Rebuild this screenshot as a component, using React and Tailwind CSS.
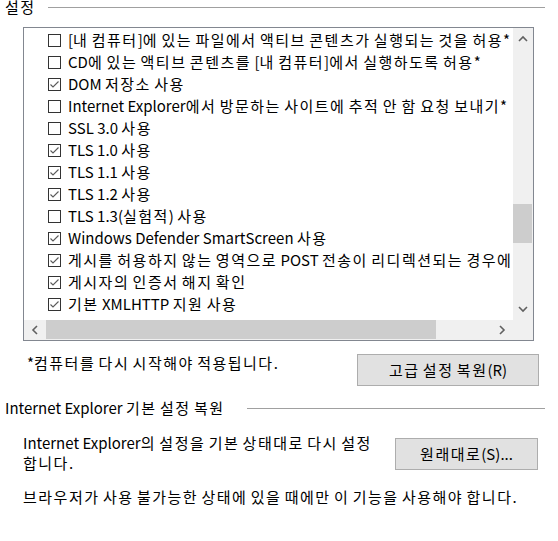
import React from 'react';

const items = [
  { label: '[내 컴퓨터]에 있는 파일에서 액티브 콘텐츠가 실행되는 것을 허용*', checked: false },
  { label: 'CD에 있는 액티브 콘텐츠를 [내 컴퓨터]에서 실행하도록 허용*', checked: false },
  { label: 'DOM 저장소 사용', checked: true },
  { label: 'Internet Explorer에서 방문하는 사이트에 추적 안 함 요청 보내기*', checked: false },
  { label: 'SSL 3.0 사용', checked: false },
  { label: 'TLS 1.0 사용', checked: true },
  { label: 'TLS 1.1 사용', checked: true },
  { label: 'TLS 1.2 사용', checked: true },
  { label: 'TLS 1.3(실험적) 사용', checked: false },
  { label: 'Windows Defender SmartScreen 사용', checked: true },
  { label: '게시를 허용하지 않는 영역으로 POST 전송이 리디렉션되는 경우에 경고', checked: true },
  { label: '게시자의 인증서 해지 확인', checked: true },
  { label: '기본 XMLHTTP 지원 사용', checked: true },
  // next row is scrolled almost out of view: only its checkbox edge shows
  { label: '', checked: true },
];

// Hangul glyphs in the reference font run a little wider than the Latin ones,
// so only the Hangul runs get extra tracking.
const K = ({ children }) => {
  const parts = String(children).split(/([\uAC00-\uD7A3]+)/);
  return parts.map((p, i) =>
    /[\uAC00-\uD7A3]/.test(p) ? (
      <span key={i} className="tracking-[1.5px]">{p}</span>
    ) : (
      <React.Fragment key={i}>{p}</React.Fragment>
    )
  );
};

const Checkbox = ({ checked }) => (
  <span className="w-[13px] h-[13px] border border-[#333333] bg-white shrink-0 flex items-center justify-center">
    {checked && (
      <svg width="11" height="11" viewBox="0 0 11 11">
        <polyline points="1.5,5.5 4,8 9.5,2.5" fill="none" stroke="#5a5a5a" strokeWidth="1.1" />
      </svg>
    )}
  </span>
);

const Chevron = ({ dir }) => {
  const pts = {
    up: '1,6 5,2 9,6',
    down: '1,2 5,6 9,2',
    left: '6,1 2,5 6,9',
    right: '2,1 6,5 2,9',
  }[dir];
  const w = dir === 'up' || dir === 'down' ? 10 : 8;
  const h = dir === 'up' || dir === 'down' ? 8 : 10;
  return (
    <svg width={w} height={h} viewBox={`0 0 ${w} ${h}`}>
      <polyline points={pts} fill="none" stroke="#606060" strokeWidth="1.6" />
    </svg>
  );
};

const GroupHeader = ({ title, lineWidth, className }) => (
  <div className={`flex items-center justify-between h-[22px] pl-[5px] pr-[13px] ${className}`}>
    <span className="text-[15px] leading-[18px] whitespace-nowrap"><K>{title}</K></span>
    <span className="h-px bg-[#a0a0a0]" style={{ width: lineWidth }} />
  </div>
);

const App = () => {
  return (
    <div
      className="w-[558px] h-[541px] bg-white overflow-hidden text-black"
      style={{ fontFamily: '"Noto Sans CJK KR", sans-serif' }}
    >
      <GroupHeader title="설정" lineWidth={497} className="-mt-[4px]" />

      <div className="ml-[23px] mt-[9px] w-[511px] h-[314px] border border-[#828790] grid grid-cols-[1fr_20px] grid-rows-[1fr_20px]">
        <div className="overflow-hidden pt-px bg-white">
          {items.map((it, i) => (
            <div key={i} className="flex items-center h-[22px] pl-[24px] gap-[7px] whitespace-nowrap">
              <Checkbox checked={it.checked} />
              {it.label && <span className="text-[15px] leading-[18px]"><K>{it.label}</K></span>}
            </div>
          ))}
        </div>

        <div className="bg-[#f0f0f0] flex flex-col">
          <div className="h-[22px] flex items-center justify-center">
            <Chevron dir="up" />
          </div>
          <div className="flex-1 flex flex-col pr-px">
            <div className="h-[154px]" />
            <div className="h-[39px] bg-[#cdcdcd]" />
          </div>
          <div className="h-[22px] flex items-center justify-center">
            <Chevron dir="down" />
          </div>
        </div>

        <div className="bg-[#f0f0f0] flex items-stretch">
          <div className="w-[22px] flex items-center justify-center">
            <Chevron dir="left" />
          </div>
          <div className="flex-1 flex pb-px">
            <div className="w-[390px] bg-[#cdcdcd]" />
          </div>
          <div className="w-[22px] flex items-center justify-center">
            <Chevron dir="right" />
          </div>
        </div>
        <div className="bg-[#f0f0f0]" />
      </div>

      <div className="flex justify-between items-start mt-[13px] pl-[27px] pr-[19px]">
        <span className="text-[15px] leading-[18px]"><K>*컴퓨터를 다시 시작해야 적용됩니다.</K></span>
        <button className="w-[182px] h-[32px] bg-[#e1e1e1] border border-[#adadad] text-[15px] leading-[18px]">
          <K>고급 설정 복원(R)</K>
        </button>
      </div>

      <GroupHeader title="Internet Explorer 기본 설정 복원" lineWidth={298} className="mt-[11px]" />

      <div className="flex justify-between items-start mt-[14px] pl-[23px] pr-[20px]">
        <p className="text-[15px] leading-[20px]">
          <K>Internet Explorer의 설정을 기본 상태대로 다시 설정</K>
          <br />
          <K>합니다.</K>
        </p>
        <button className="mt-[5px] w-[143px] h-[32px] bg-[#e1e1e1] border border-[#adadad] text-[15px] leading-[18px]">
          <K>원래대로(S)...</K>
        </button>
      </div>

      <p className="mt-[14px] pl-[23px] text-[15px] leading-[20px]">
        <K>브라우저가 사용 불가능한 상태에 있을 때에만 이 기능을 사용해야 합니다.</K>
      </p>
    </div>
  );
};

export default App;
